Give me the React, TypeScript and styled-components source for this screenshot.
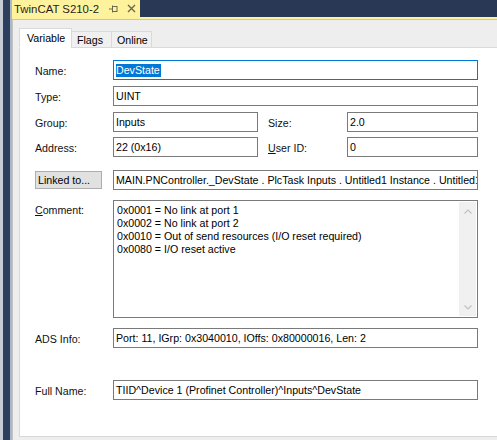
import React from "react";
import styled, { createGlobalStyle } from "styled-components";

const GlobalStyle = createGlobalStyle`
  html, body { margin: 0; padding: 0; background: #eeeeee; }
  body { font-family: "Liberation Sans", Arial, sans-serif; }
  * { box-sizing: border-box; }
`;

const FONT = `"Liberation Sans", Arial, sans-serif`;

const Shell = styled.div`
  display: flex;
  width: 497px;
  height: 440px;
  overflow: hidden;
  font-family: ${FONT};
  font-size: 10.65px;
  color: #000;
`;

const SideStrip = styled.div`
  flex: 0 0 12px;
  background: linear-gradient(
    to right,
    #c8ccd4 0 3px,
    #2e3e5d 3px 10px,
    #aeb7c8 10px 12px
  );
`;

const Main = styled.div`
  flex: 1;
  display: flex;
  flex-direction: column;
  min-width: 0;
`;

const TitleRow = styled.div`
  height: 17px;
  display: flex;
  background: #293955;
`;

const DocTab = styled.div`
  width: 128px;
  background: #fff29d;
  display: flex;
  align-items: center;
  padding-left: 2px;
  font-size: 11.4px;
  color: #1e1e1e;
`;

const TabTitle = styled.span`
  margin-right: 10px;
  white-space: nowrap;
`;

const IconBtn = styled.span<{ $gap?: number }>`
  display: inline-flex;
  align-items: center;
  justify-content: center;
  margin-right: ${(p) => p.$gap ?? 0}px;
`;

const AccentLine = styled.div`
  height: 2px;
  background: #fff29d;
`;

const Panel = styled.div`
  flex: 1;
  display: flex;
  flex-direction: column;
  background: #eeeeee;
  border-top: 1px solid #c4c4c4;
  border-left: 1px solid #c4c4c4;
  padding: 8px 0 3px 6px;
  min-height: 0;
`;

const TabStrip = styled.div`
  display: flex;
  align-items: flex-end;
  height: 20px;
  margin-bottom: -1px;
  position: relative;
  z-index: 1;
`;

const Tab = styled.div<{ $active?: boolean; $w: number }>`
  width: ${(p) => p.$w}px;
  height: ${(p) => (p.$active ? 20 : 17)}px;
  display: flex;
  align-items: center;
  padding-left: ${(p) => (p.$active ? 7 : 5)}px;
  padding-bottom: ${(p) => (p.$active ? 1 : 0)}px;
  background: ${(p) => (p.$active ? "#ffffff" : "#f0f0f0")};
  border: 1px solid #d9d9d9;
  border-bottom: ${(p) => (p.$active ? "1px solid #ffffff" : "1px solid #d9d9d9")};
  margin-left: ${(p) => (p.$active ? 0 : -1)}px;
  white-space: nowrap;
  &:first-child {
    margin-left: 0;
  }
`;

const TabPage = styled.div`
  flex: 1;
  background: #ffffff;
  border: 1px solid #d9d9d9;
  border-right: none;
  padding: 12px 0 0 15px;
  display: flex;
  flex-direction: column;
`;

const Row = styled.div<{ $top?: number; $start?: boolean }>`
  display: flex;
  align-items: ${(p) => (p.$start ? "flex-start" : "center")};
  margin-top: ${(p) => p.$top ?? 0}px;
`;

const Label = styled.div<{ $w?: number; $pt?: number }>`
  width: ${(p) => p.$w ?? 78}px;
  flex: 0 0 auto;
  padding-top: ${(p) => p.$pt ?? 1}px;
  white-space: nowrap;
  color: #111;
`;

const Field = styled.div<{ $w?: number; $focus?: boolean }>`
  width: ${(p) => p.$w ?? 365}px;
  height: 20px;
  flex: 0 0 auto;
  border: 1px solid ${(p) => (p.$focus ? "#0078d7" : "#7a7a7a")};
  background: #fff;
  padding: 0 2px;
  line-height: 18px;
  white-space: nowrap;
  overflow: hidden;
`;

const Selected = styled.span`
  background: #0078d7;
  color: #fff;
  display: inline-block;
  line-height: 13px;
  padding: 0 1px 0 0;
`;

const Spacer = styled.div<{ $w: number }>`
  width: ${(p) => p.$w}px;
  flex: 0 0 auto;
`;

const LinkButton = styled.button`
  width: 67px;
  height: 18px;
  margin-right: 11px;
  flex: 0 0 auto;
  background: #e1e1e1;
  border: 1px solid #adadad;
  font-family: ${FONT};
  font-size: 10.65px;
  color: #000;
  text-align: left;
  padding: 0 0 0 2px;
`;

const TextArea = styled.div`
  width: 365px;
  height: 118px;
  border: 1px solid #7a7a7a;
  background: #fff;
  display: flex;
  padding: 1px;
`;

const AreaText = styled.div`
  flex: 1;
  padding: 2px 0 0 2px;
  line-height: 13px;
`;

const ScrollBar = styled.div`
  width: 17px;
  background: #f0f0f0;
  display: flex;
  flex-direction: column;
  justify-content: space-between;
  align-items: center;
  padding: 7px 0 6px;
`;

const U = styled.span`
  text-decoration: underline;
  text-underline-offset: 1px;
`;

const Chevron = ({ up }: { up?: boolean }) => (
  <svg width="8" height="5" viewBox="0 0 8 5">
    <polyline
      points={up ? "0.5,4.5 4,1 7.5,4.5" : "0.5,0.5 4,4 7.5,0.5"}
      fill="none"
      stroke="#c2c2c2"
      strokeWidth="1.2"
    />
  </svg>
);

const PinIcon = () => (
  <svg width="9" height="8" viewBox="0 0 9 8">
    <line x1="0" y1="4" x2="3" y2="4" stroke="#6b6850" strokeWidth="1" />
    <line x1="3.5" y1="0.5" x2="3.5" y2="7.5" stroke="#6b6850" strokeWidth="1" />
    <rect x="3.5" y="1.5" width="4.5" height="5" fill="none" stroke="#6b6850" strokeWidth="1" />
  </svg>
);

const CloseIcon = () => (
  <svg width="9" height="9" viewBox="0 0 9 9">
    <path d="M1 1 L8 8 M8 1 L1 8" stroke="#6b6850" strokeWidth="1.4" />
  </svg>
);

export default function App() {
  return (
    <>
      <GlobalStyle />
      <Shell>
        <SideStrip />
        <Main>
          <TitleRow>
            <DocTab>
              <TabTitle>TwinCAT S210-2</TabTitle>
              <IconBtn $gap={9}>
                <PinIcon />
              </IconBtn>
              <IconBtn>
                <CloseIcon />
              </IconBtn>
            </DocTab>
          </TitleRow>
          <AccentLine />
          <Panel>
            <TabStrip>
              <Tab $active $w={53}>Variable</Tab>
              <Tab $w={41}>Flags</Tab>
              <Tab $w={41}>Online</Tab>
            </TabStrip>
            <TabPage>
              <Row>
                <Label>Name:</Label>
                <Field $focus>
                  <Selected>DevState</Selected>
                </Field>
              </Row>
              <Row $top={6}>
                <Label>Type:</Label>
                <Field>UINT</Field>
              </Row>
              <Row $top={6}>
                <Label>Group:</Label>
                <Field $w={145}>Inputs</Field>
                <Spacer $w={10} />
                <Label $w={79}>Size:</Label>
                <Field $w={131}>2.0</Field>
              </Row>
              <Row $top={5}>
                <Label>Address:</Label>
                <Field $w={145}>22 (0x16)</Field>
                <Spacer $w={10} />
                <Label $w={79}>
                  <U>U</U>ser ID:
                </Label>
                <Field $w={131}>0</Field>
              </Row>
              <Row $top={13}>
                <LinkButton>Linked to...</LinkButton>
                <Field>
                  MAIN.PNController._DevState . PlcTask Inputs . Untitled1 Instance . Untitled1 Task
                </Field>
              </Row>
              <Row $top={10} $start>
                <Label $pt={4}>
                  <U>C</U>omment:
                </Label>
                <TextArea>
                  <AreaText>
                    0x0001 = No link at port 1
                    <br />
                    0x0002 = No link at port 2
                    <br />
                    0x0010 = Out of send resources (I/O reset required)
                    <br />
                    0x0080 = I/O reset active
                  </AreaText>
                  <ScrollBar>
                    <Chevron up />
                    <Chevron />
                  </ScrollBar>
                </TextArea>
              </Row>
              <Row $top={10}>
                <Label $pt={2}>ADS Info:</Label>
                <Field>Port: 11, IGrp: 0x3040010, IOffs: 0x80000016, Len: 2</Field>
              </Row>
              <Row $top={32}>
                <Label $pt={2}>Full Name:</Label>
                <Field>TIID^Device 1 (Profinet Controller)^Inputs^DevState</Field>
              </Row>
            </TabPage>
          </Panel>
        </Main>
      </Shell>
    </>
  );
}
